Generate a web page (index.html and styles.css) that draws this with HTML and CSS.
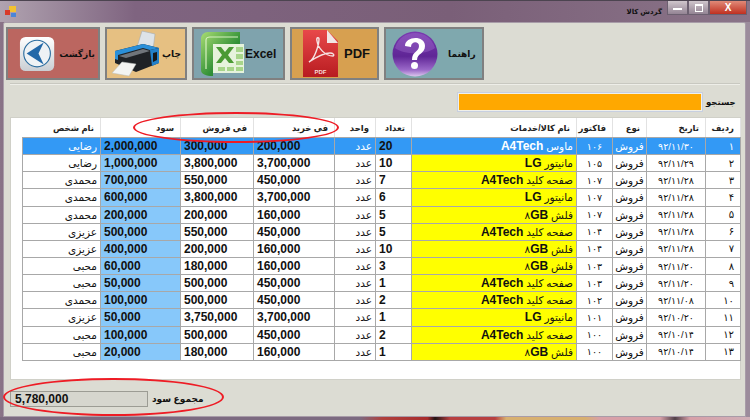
FILE: index.html
```html
<!DOCTYPE html>
<html lang="fa">
<head>
    <meta charset="UTF-8">
    <title>گردش کالا</title>
    <link rel="stylesheet" href="styles.css">
</head>
<body>

<div class="window">
    <div class="titlebar">
        <svg class="app-icon" width="12" height="12" viewBox="0 0 12 12">
            <rect x="4" y="0" width="7" height="6" fill="#f2c230"/>
            <rect x="0" y="4" width="5" height="5" fill="#d83a2a"/>
            <rect x="6" y="7" width="5" height="4" fill="#4a86d8"/>
        </svg>
        <span class="title">گردش کالا</span>
        <div class="win-buttons">
            <span class="win-btn"><i class="min-mark"></i></span>
            <span class="win-btn"><i class="max-mark"></i></span>
            <span class="win-btn win-close">X</span>
        </div>
    </div>

    <div class="client">
        <div class="toolbar">
            <button class="tool tool-back">
                <svg width="38" height="38" viewBox="0 0 38 38">
                    <defs>
                        <linearGradient id="tile" x1="0" y1="0" x2="0" y2="1">
                            <stop offset="0" stop-color="#ffffff"/>
                            <stop offset="1" stop-color="#c9ced3"/>
                        </linearGradient>
                    </defs>
                    <rect x="1" y="1" width="36" height="36" rx="6" fill="url(#tile)"/>
                    <circle cx="19" cy="18.5" r="14" fill="#eef2f5" stroke="#2a6c9e" stroke-width="1.2"/>
                    <path d="M8 18.5 L26 7 L20.500 18.5 L26 30 Z" fill="#2268a8"/>
                </svg>
                <span>بازگشت</span>
            </button>
            <button class="tool tool-print">
                <svg width="48" height="48" viewBox="0 0 48 48">
                    <path d="M25 17 L30 1 L43 4 L41 20 Z" fill="#dde3e8" stroke="#a5adb4" stroke-width=".6"/>
                    <path d="M3 21 L31 14 L47 18 V33 L24 42 L3 33 Z" fill="#1f2226"/>
                    <path d="M3 21 L31 14 L47 18 L38 20 L31 18 L6 25 L6 30 L3 29 Z" fill="#2a8fd8"/>
                    <path d="M7 26 L31 19 L38 21 L14 28 Z" fill="#70757b"/>
                    <path d="M38 20 L47 18 V33 L40 36 Z" fill="#2380c8"/>
                    <path d="M41 23 L45 22 V30 L41 32 Z" fill="#17181a"/>
                    <path d="M0 43 L10 32 L24 34 L17 46 Z" fill="#f3f4f2" stroke="#b9bdbd" stroke-width=".5"/>
                </svg>
                <span>چاپ</span>
            </button>
            <button class="tool tool-excel">
                <svg width="45" height="48" viewBox="0 0 45 48">
                    <defs>
                        <linearGradient id="xl" x1="0" y1="0" x2="1" y2="1">
                            <stop offset="0" stop-color="#a8dc72"/>
                            <stop offset=".6" stop-color="#2f8f36"/>
                            <stop offset="1" stop-color="#1e7a2a"/>
                        </linearGradient>
                    </defs>
                    <path d="M8 2 H40 V14 H13 V46 C6 46 1 44 1 40 V9 C1 5 4 2 8 2 Z" fill="url(#xl)"/>
                    <path d="M6 39 V10 C6 8 8 7 10 7 H38" fill="none" stroke="#d8f0c0" stroke-width="1.200"/>
                    <rect x="13" y="14" width="31" height="29" fill="#e6f3dc"/>
                    <g fill="#a7d58a">
                        <rect x="36" y="17" width="7" height="5"/>
                        <rect x="36" y="24" width="7" height="5"/>
                        <rect x="36" y="31" width="7" height="4"/>
                        <rect x="36" y="37" width="7" height="4"/>
                        <rect x="27" y="37" width="7" height="4"/>
                        <rect x="18" y="37" width="7" height="4"/>
                    </g>
                    <path d="M16 17 H21 L25 22 L29 17 H34 L28 25 L34 33 H29 L25 28 L21 33 H16 L22 25 Z" fill="#4a9a34"/>
                </svg>
                <span class="latin">Excel</span>
            </button>
            <button class="tool tool-pdf">
                <svg width="36" height="48" viewBox="0 0 36 48">
                    <defs>
                        <linearGradient id="pdf-red" x1="0" y1="0" x2="0" y2="1">
                            <stop offset="0" stop-color="#e8484a"/>
                            <stop offset="1" stop-color="#b81c20"/>
                        </linearGradient>
                    </defs>
                    <path d="M0 0 H24 L35 11 V47 H0 Z" fill="url(#pdf-red)"/>
                    <path d="M24 0 L35 13 H24 Z" fill="#f1e6e6"/>
                    <path d="M6 32 C12 29 16 14 16 9 C16 7 13 7 14 11 C15 18 22 26 30 26 C32 25 30 23 27 23 C21 23 12 28 6 32 Z" fill="none" stroke="#f6e3e3" stroke-width="1.400"/>
                    <text x="17.500" y="44" class="pdf-mark">PDF</text>
                </svg>
                <span class="latin">PDF</span>
            </button>
            <button class="tool tool-help">
                <svg width="46" height="46" viewBox="0 0 46 46">
                    <defs>
                        <linearGradient id="ball" x1="0" y1="0" x2="0" y2="1">
                            <stop offset="0" stop-color="#7a3cb0"/>
                            <stop offset=".55" stop-color="#5f2596"/>
                            <stop offset=".85" stop-color="#9a68c8"/>
                            <stop offset="1" stop-color="#ddc8ee"/>
                        </linearGradient>
                    </defs>
                    <circle cx="23" cy="23" r="22.500" fill="url(#ball)"/>
                    <path d="M3 17 C6 7 14 2 23 2 C32 2 40 7 43 17 C34 24 12 24 3 17 Z" fill="#a878d4" opacity=".35"/>
                    <path d="M13 15 C13 5 33 4 33 15 C33 23 25 22 25 29 H20 C20 20 27 21 27 15 C27 10 19 10 19 16 Z" fill="#fff"/>
                    <circle cx="22.500" cy="34.500" r="3.500" fill="#fff"/>
                </svg>
                <span>راهنما</span>
            </button>
        </div>

        <div class="separator"></div>

        <div class="search-row">
            <input class="search-box" type="text">
            <label class="search-label">جستجو</label>
        </div>

        <div class="grid-panel">
            <table class="goods-table">
                <colgroup>
                    <col class="c-name"><col class="c-profit"><col class="c-sell"><col class="c-buy"><col class="c-unit"><col class="c-qty"><col class="c-item"><col class="c-invoice"><col class="c-type"><col class="c-date"><col class="c-row">
                </colgroup>
                <thead>
                    <tr>
                        <th>نام شخص</th>
                        <th>سود</th>
                        <th>في فروش</th>
                        <th>في خرید</th>
                        <th>واحد</th>
                        <th>تعداد</th>
                        <th>نام کالا/خدمات</th>
                        <th>فاکتور</th>
                        <th>نوع</th>
                        <th>تاریخ</th>
                        <th>ردیف</th>
                    </tr>
                </thead>
                <tbody>
                    <tr class="selected">
                        <td>رضایی</td><td class="num profit">2,000,000</td><td class="num">300,000</td><td class="num">200,000</td><td>عدد</td><td class="num">20</td><td class="item">ماوس <b>A4Tech</b></td><td class="fa-num">۱۰۶</td><td class="mid">فروش</td><td class="fa-num">۹۲/۱۱/۳۰</td><td class="row-no">۱</td>
                    </tr>
                    <tr>
                        <td>رضایی</td><td class="num profit">1,000,000</td><td class="num">3,800,000</td><td class="num">3,700,000</td><td>عدد</td><td class="num">10</td><td class="item">مانیتور <b>LG</b></td><td class="fa-num">۱۰۵</td><td class="mid">فروش</td><td class="fa-num">۹۲/۱۱/۲۹</td><td class="row-no">۲</td>
                    </tr>
                    <tr>
                        <td>محمدی</td><td class="num profit">700,000</td><td class="num">550,000</td><td class="num">450,000</td><td>عدد</td><td class="num">7</td><td class="item">صفحه کلید <b>A4Tech</b></td><td class="fa-num">۱۰۷</td><td class="mid">فروش</td><td class="fa-num">۹۲/۱۱/۲۸</td><td class="row-no">۳</td>
                    </tr>
                    <tr>
                        <td>محمدی</td><td class="num profit">600,000</td><td class="num">3,800,000</td><td class="num">3,700,000</td><td>عدد</td><td class="num">6</td><td class="item">مانیتور <b>LG</b></td><td class="fa-num">۱۰۷</td><td class="mid">فروش</td><td class="fa-num">۹۲/۱۱/۲۸</td><td class="row-no">۴</td>
                    </tr>
                    <tr>
                        <td>محمدی</td><td class="num profit">200,000</td><td class="num">200,000</td><td class="num">160,000</td><td>عدد</td><td class="num">5</td><td class="item">فلش <i class="digit">۸</i><b>GB</b></td><td class="fa-num">۱۰۷</td><td class="mid">فروش</td><td class="fa-num">۹۲/۱۱/۲۸</td><td class="row-no">۵</td>
                    </tr>
                    <tr>
                        <td>عزیزی</td><td class="num profit">500,000</td><td class="num">550,000</td><td class="num">450,000</td><td>عدد</td><td class="num">5</td><td class="item">صفحه کلید <b>A4Tech</b></td><td class="fa-num">۱۰۴</td><td class="mid">فروش</td><td class="fa-num">۹۲/۱۱/۲۸</td><td class="row-no">۶</td>
                    </tr>
                    <tr>
                        <td>عزیزی</td><td class="num profit">400,000</td><td class="num">200,000</td><td class="num">160,000</td><td>عدد</td><td class="num">10</td><td class="item">فلش <i class="digit">۸</i><b>GB</b></td><td class="fa-num">۱۰۴</td><td class="mid">فروش</td><td class="fa-num">۹۲/۱۱/۲۸</td><td class="row-no">۷</td>
                    </tr>
                    <tr>
                        <td>محبی</td><td class="num profit">60,000</td><td class="num">180,000</td><td class="num">160,000</td><td>عدد</td><td class="num">3</td><td class="item">فلش <i class="digit">۸</i><b>GB</b></td><td class="fa-num">۱۰۳</td><td class="mid">فروش</td><td class="fa-num">۹۲/۱۱/۲۰</td><td class="row-no">۸</td>
                    </tr>
                    <tr>
                        <td>محبی</td><td class="num profit">50,000</td><td class="num">500,000</td><td class="num">450,000</td><td>عدد</td><td class="num">1</td><td class="item">صفحه کلید <b>A4Tech</b></td><td class="fa-num">۱۰۳</td><td class="mid">فروش</td><td class="fa-num">۹۲/۱۱/۲۰</td><td class="row-no">۹</td>
                    </tr>
                    <tr>
                        <td>محمدی</td><td class="num profit">100,000</td><td class="num">500,000</td><td class="num">450,000</td><td>عدد</td><td class="num">2</td><td class="item">صفحه کلید <b>A4Tech</b></td><td class="fa-num">۱۰۲</td><td class="mid">فروش</td><td class="fa-num">۹۲/۱۱/۰۸</td><td class="row-no">۱۰</td>
                    </tr>
                    <tr>
                        <td>عزیزی</td><td class="num profit">50,000</td><td class="num">3,750,000</td><td class="num">3,700,000</td><td>عدد</td><td class="num">1</td><td class="item">مانیتور <b>LG</b></td><td class="fa-num">۱۰۱</td><td class="mid">فروش</td><td class="fa-num">۹۲/۱۰/۲۰</td><td class="row-no">۱۱</td>
                    </tr>
                    <tr>
                        <td>محبی</td><td class="num profit">100,000</td><td class="num">500,000</td><td class="num">450,000</td><td>عدد</td><td class="num">2</td><td class="item">صفحه کلید <b>A4Tech</b></td><td class="fa-num">۱۰۰</td><td class="mid">فروش</td><td class="fa-num">۹۲/۱۰/۱۴</td><td class="row-no">۱۲</td>
                    </tr>
                    <tr>
                        <td>محبی</td><td class="num profit">20,000</td><td class="num">180,000</td><td class="num">160,000</td><td>عدد</td><td class="num">1</td><td class="item">فلش <i class="digit">۸</i><b>GB</b></td><td class="fa-num">۱۰۰</td><td class="mid">فروش</td><td class="fa-num">۹۲/۱۰/۱۴</td><td class="row-no">۱۳</td>
                    </tr>
                </tbody>
            </table>
        </div>

        <div class="total-row">
            <div class="total-box">5,780,000</div>
            <span class="total-label">مجموع سود</span>
        </div>
    </div>

    <div class="desktop-strip"></div>

    <div class="circle circle-head"></div>
    <div class="circle circle-total"></div>
</div>

</body>
</html>
```

FILE: styles.css
```css
body {
    font-family: "Liberation Sans", "DejaVu Sans", sans-serif;
    margin: 0;
    padding: 0;
    width: 750px;
    height: 420px;
    overflow: hidden;
}

.window {
    position: relative;
    width: 750px;
    height: 420px;
    overflow: hidden;
    background: linear-gradient(90deg, #8a7488 0, #7c6078 3%, #9c8c9c 99%);
    padding-left: 3px;
    box-sizing: border-box;
}

/* title bar */
.titlebar {
    display: flex;
    align-items: center;
    height: 22px;
    margin-left: -3px;
    padding-left: 5px;
    background: linear-gradient(90deg, #b0a3b0 0, #7f6480 18%, #7a5f78 60%, #8a7488 100%);
    border-top: 1px solid #4c4450;
    box-sizing: border-box;
}

.title {
    margin-left: auto;
    margin-right: 5px;
    font-size: 7px;
    font-weight: bold;
    color: #111;
}

.win-buttons {
    display: flex;
    align-self: flex-start;
    height: 15px;
    margin-right: 3px;
}

.win-btn {
    display: flex;
    align-items: center;
    justify-content: center;
    width: 21px;
    height: 14px;
    background: linear-gradient(#cfc6cc, #948494);
    border: 1px solid #6c6070;
    border-top: none;
    box-sizing: border-box;
}

.win-close {
    width: 38px;
    background: linear-gradient(#e08a78, #c03020);
    color: #fff;
    font-size: 10px;
    font-weight: bold;
}

.min-mark {
    width: 9px;
    height: 2px;
    margin-top: 3px;
    background: #fff;
}

.max-mark {
    width: 6px;
    height: 5px;
    border: 1px solid #fff;
    border-top-width: 2px;
}

/* main form area */
.client {
    display: flex;
    flex-direction: column;
    width: 743px;
    height: 395px;
    background-color: #dcdcd3;
    border: 1px solid #a89ca8;
    border-radius: 2px 2px 0 0;
    box-sizing: border-box;
    padding: 4px 4px 0 2px;
}

.toolbar {
    display: flex;
    height: 53px;
}

.tool {
    display: flex;
    align-items: center;
    height: 53px;
    padding: 0 3px 0 0;
    margin-right: 5px;
    border: 2px solid #808080;
    box-sizing: border-box;
    font-family: inherit;
    font-size: 9px;
    font-weight: bold;
    color: #111;
    cursor: pointer;
}

.tool .latin {
    font-size: 12px;
}

.tool-back {
    width: 94px;
    padding-left: 11px;
    gap: 4px;
    background-color: #bb6660;
}

.tool-print {
    width: 82px;
    padding-left: 5px;
    gap: 2px;
    background-color: #e6c082;
}

.tool-excel {
    width: 93px;
    padding-left: 6px;
    background-color: #7fa3ad;
}

.tool-pdf {
    width: 89px;
    padding-left: 11px;
    gap: 5px;
    background-color: #d7a050;
}

.tool-pdf .latin {
    font-size: 13px;
}

.tool-help {
    width: 100px;
    padding-left: 6px;
    gap: 10px;
    margin-right: 0;
    background-color: #7fa8ae;
}

.pdf-mark {
    font-size: 6px;
    font-weight: bold;
    fill: #f5dcdc;
    text-anchor: middle;
}

.separator {
    height: 2px;
    margin: 3px 0 0 4px;
    width: 730px;
    background-color: #eeeee8;
    border-top: 1px solid #c8c8c0;
    box-sizing: border-box;
}

.search-row {
    display: flex;
    align-items: center;
    height: 20px;
    margin-top: 7px;
    padding-left: 451px;
}

.search-box {
    width: 246px;
    height: 20px;
    padding: 0;
    border: 1px solid #c7cfe0;
    box-shadow: inset 0 0 0 1px #f0f0ea;
    background-color: #ffa800;
    box-sizing: border-box;
}

.search-label {
    margin-left: 3px;
    font-size: 8.500px;
    font-weight: bold;
    color: #111;
}

/* data grid */
.grid-panel {
    width: 731px;
    height: 263px;
    margin: 5px 0 0 4px;
    padding-left: 11px;
    background-color: #fff;
    border: 1px solid #d0d0c8;
    box-sizing: border-box;
}

.goods-table {
    table-layout: fixed;
    width: 718px;
    border-collapse: collapse;
    direction: ltr;
}

.c-name { width: 78px; }
.c-profit { width: 80px; }
.c-sell { width: 73px; }
.c-buy { width: 81px; }
.c-unit { width: 41px; }
.c-qty { width: 36px; }
.c-item { width: 165px; }
.c-invoice { width: 36px; }
.c-type { width: 34px; }
.c-date { width: 59px; }
.c-row { width: 35px; }

.goods-table th {
    height: 19px;
    padding: 0 6px;
    border-right: 1px solid #e2e2e2;
    border-bottom: 1px solid #a8a8a8;
    background-color: #fff;
    font-size: 8.500px;
    font-weight: bold;
    color: #222;
    text-align: right;
    direction: rtl;
    white-space: nowrap;
}

.goods-table td {
    height: 17.150px;
    padding: 0 3px 0 2px;
    border: 1px solid #a8a8a8;
    font-size: 10.500px;
    color: #111;
    text-align: right;
    direction: rtl;
    white-space: nowrap;
    overflow: hidden;
    box-sizing: border-box;
}

.goods-table td.num {
    padding-left: 3px;
    direction: ltr;
    text-align: left;
    font-size: 12px;
    font-weight: bold;
}

.goods-table td.profit {
    background-color: #87c8fa;
}

.goods-table td.item {
    background-color: #ffff00;
}

.goods-table td.mid {
    padding: 0;
    text-align: center;
}

.goods-table td.fa-num {
    padding: 0;
    text-align: center;
    font-size: 9.500px;
    letter-spacing: 2px;
}

.goods-table td.row-no {
    padding-right: 6px;
    font-size: 10px;
    letter-spacing: 1px;
}

.goods-table b {
    font-size: 12px;
}

.goods-table .digit {
    font-style: normal;
}

.selected td,
.goods-table .selected td.profit,
.goods-table .selected td.item {
    background-color: #3399f5;
    color: #fff;
}

.goods-table .selected td.num {
    color: #111;
}

/* footer */
.total-row {
    display: flex;
    align-items: center;
    margin: 11px 0 0 4px;
}

.total-box {
    width: 138px;
    height: 16px;
    padding-left: 4px;
    background-color: #d6d6ce;
    border: 1px solid #9c9c94;
    box-sizing: border-box;
    font-size: 12px;
    font-weight: bold;
    line-height: 14px;
    color: #111;
}

.total-label {
    margin-left: 4px;
    font-size: 9px;
    font-weight: bold;
    color: #111;
}

/* what shows of the desktop under the window */
.desktop-strip {
    height: 3px;
    margin: 0 0 0 -3px;
    background: linear-gradient(90deg, #7c6a80 0, #7c6a80 48%, #b0403c 51%, #a82c2c 57%, #201414 58%, #b84040 60%, #b84040 66%, #d8b070 67.500%, #d8b070 78%, #d8a0a8 80%, #d8a0a8 88%, #504048 90%, #d8a0a8 92%, #d0b0b8 100%);
}

/* red marks drawn over the screenshot */
.circle {
    position: absolute;
    border: 2px solid #ee1c25;
    border-radius: 50%;
    box-sizing: border-box;
}

.circle-head {
    left: 133px;
    top: 112px;
    width: 206px;
    height: 31px;
}

.circle-total {
    left: 3px;
    top: 378px;
    width: 221px;
    height: 38px;
}
```
